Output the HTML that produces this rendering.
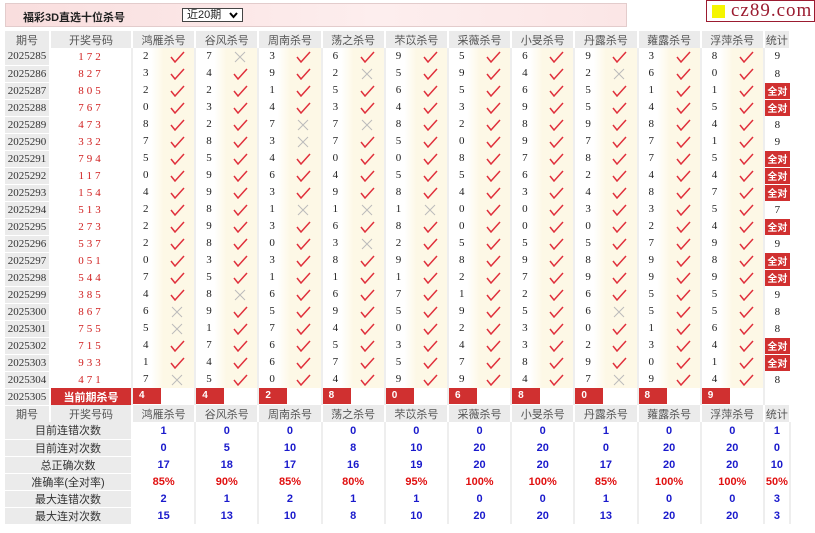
<!DOCTYPE html>
<html><head><meta charset="utf-8">
<style>
*{margin:0;padding:0;box-sizing:border-box}
body{width:815px;height:533px;background:#fff;position:relative;overflow:hidden;font-family:"Liberation Sans","Noto Sans CJK SC",sans-serif;font-size:11px;color:#222}
.bar{position:absolute;left:5px;top:3px;width:622px;height:24px;background:linear-gradient(to right,#f9dede,#fdeeee 60%,#fbe6e6);border:1px solid #e3cccc}
.bar .t{position:absolute;left:17px;top:5px;font-weight:bold;font-size:11px;color:#222}
.sel{position:absolute;left:176px;top:4px;width:61px;height:14px;border:1px solid #444;background:#fff;font-size:11px;line-height:12px;padding-left:4px}
.sel svg{position:absolute;right:4px;top:3px}
.logo{position:absolute;left:706px;top:0;width:109px;height:22px;border:1px solid #9b1b30;background:#fff;overflow:hidden}
.logo i{position:absolute;left:5px;top:4px;width:13px;height:13px;background:#f5f500}
.logo span{position:absolute;left:24px;top:-1px;font-family:"Liberation Serif",serif;font-size:19px;color:#9b1b30;letter-spacing:1px}
table{position:absolute;left:5px;top:31px;border-collapse:collapse;table-layout:fixed}
td{height:17px;padding:0;text-align:center;vertical-align:middle;white-space:nowrap}
.h td{background:#ebebeb;color:#555;font-size:11px;border-right:2px solid #fff}
.d{background:#ebebeb;font-family:"Liberation Serif",serif;font-size:11px;color:#333;border-bottom:1px solid #fff;border-right:2px solid #fff}
.n{color:#d02020;font-family:"Liberation Serif",serif;letter-spacing:3px;font-size:11px;border-right:2px solid #eee}
.k{position:relative;background:linear-gradient(to right,#fff 30%,#fdf8e6 50%,#fdf8e6);border-right:2px solid #eee}
.k b{position:absolute;left:10px;top:2px;font-weight:normal;font-family:"Liberation Serif",serif;font-size:11px}
.k svg{position:absolute;left:37px;top:3px}
.s{font-family:"Liberation Serif",serif;border-bottom:1px solid #fff}
.q{background:#d03030;color:#fff;font-weight:bold;font-size:10px;border-bottom:1px solid #fff}
.cur td.r{background:#d03030;color:#fff;font-weight:bold;border-right:2px solid #eee}
.cur td.kk{position:relative;border-right:2px solid #eee}
.cur td.kk span{position:absolute;left:0;top:0;width:28px;height:16px;background:#d03030;color:#fff;font-weight:bold;font-size:10px;text-align:left;padding-left:6px;line-height:16px}
.st td.l{background:#ebebeb;color:#333;border-bottom:1px solid #fff;border-right:2px solid #fff}
.st td.v{color:#1a1acc;font-weight:bold;font-size:11px;border-right:2px solid #eee}
.st td.p{color:#e01010}
</style></head><body>
<svg width="0" height="0" style="position:absolute"><defs>
<g id="c"><polyline points="1,6 5,11 14,1" fill="none" stroke="#e0303c" stroke-width="1.5"/></g>
<g id="x"><path d="M2,1 L12,11 M12,1 L2,11" stroke="#bbb" stroke-width="1"/></g>
</defs></svg>
<div class="bar"><span class="t">福彩3D直选十位杀号</span><div class="sel">近20期<svg width="9" height="7"><polyline points="1,1 4.5,5 8,1" fill="none" stroke="#000" stroke-width="2"/></svg></div></div>
<div class="logo"><i></i><span>cz89.com</span></div>
<table>
<colgroup><col style="width:45px"><col style="width:82px"><col span="10" style="width:63.2px"><col style="width:26px"></colgroup>
<tr class="h"><td>期号</td><td>开奖号码</td><td>鸿雁杀号</td><td>谷风杀号</td><td>周南杀号</td><td>荡之杀号</td><td>芣苡杀号</td><td>采薇杀号</td><td>小旻杀号</td><td>丹露杀号</td><td>蕹露杀号</td><td>浮萍杀号</td><td>统计</td></tr>
<tr><td class="d">2025285</td><td class="n">172</td><td class="k"><b>2</b><svg width="15" height="12"><use href="#c"/></svg></td><td class="k"><b>7</b><svg width="15" height="12"><use href="#x"/></svg></td><td class="k"><b>3</b><svg width="15" height="12"><use href="#c"/></svg></td><td class="k"><b>6</b><svg width="15" height="12"><use href="#c"/></svg></td><td class="k"><b>9</b><svg width="15" height="12"><use href="#c"/></svg></td><td class="k"><b>5</b><svg width="15" height="12"><use href="#c"/></svg></td><td class="k"><b>6</b><svg width="15" height="12"><use href="#c"/></svg></td><td class="k"><b>9</b><svg width="15" height="12"><use href="#c"/></svg></td><td class="k"><b>3</b><svg width="15" height="12"><use href="#c"/></svg></td><td class="k"><b>8</b><svg width="15" height="12"><use href="#c"/></svg></td><td class="s">9</td></tr>
<tr><td class="d">2025286</td><td class="n">827</td><td class="k"><b>3</b><svg width="15" height="12"><use href="#c"/></svg></td><td class="k"><b>4</b><svg width="15" height="12"><use href="#c"/></svg></td><td class="k"><b>9</b><svg width="15" height="12"><use href="#c"/></svg></td><td class="k"><b>2</b><svg width="15" height="12"><use href="#x"/></svg></td><td class="k"><b>5</b><svg width="15" height="12"><use href="#c"/></svg></td><td class="k"><b>9</b><svg width="15" height="12"><use href="#c"/></svg></td><td class="k"><b>4</b><svg width="15" height="12"><use href="#c"/></svg></td><td class="k"><b>2</b><svg width="15" height="12"><use href="#x"/></svg></td><td class="k"><b>6</b><svg width="15" height="12"><use href="#c"/></svg></td><td class="k"><b>0</b><svg width="15" height="12"><use href="#c"/></svg></td><td class="s">8</td></tr>
<tr><td class="d">2025287</td><td class="n">805</td><td class="k"><b>2</b><svg width="15" height="12"><use href="#c"/></svg></td><td class="k"><b>2</b><svg width="15" height="12"><use href="#c"/></svg></td><td class="k"><b>1</b><svg width="15" height="12"><use href="#c"/></svg></td><td class="k"><b>5</b><svg width="15" height="12"><use href="#c"/></svg></td><td class="k"><b>6</b><svg width="15" height="12"><use href="#c"/></svg></td><td class="k"><b>5</b><svg width="15" height="12"><use href="#c"/></svg></td><td class="k"><b>6</b><svg width="15" height="12"><use href="#c"/></svg></td><td class="k"><b>5</b><svg width="15" height="12"><use href="#c"/></svg></td><td class="k"><b>1</b><svg width="15" height="12"><use href="#c"/></svg></td><td class="k"><b>1</b><svg width="15" height="12"><use href="#c"/></svg></td><td class="q">全对</td></tr>
<tr><td class="d">2025288</td><td class="n">767</td><td class="k"><b>0</b><svg width="15" height="12"><use href="#c"/></svg></td><td class="k"><b>3</b><svg width="15" height="12"><use href="#c"/></svg></td><td class="k"><b>4</b><svg width="15" height="12"><use href="#c"/></svg></td><td class="k"><b>3</b><svg width="15" height="12"><use href="#c"/></svg></td><td class="k"><b>4</b><svg width="15" height="12"><use href="#c"/></svg></td><td class="k"><b>3</b><svg width="15" height="12"><use href="#c"/></svg></td><td class="k"><b>9</b><svg width="15" height="12"><use href="#c"/></svg></td><td class="k"><b>5</b><svg width="15" height="12"><use href="#c"/></svg></td><td class="k"><b>4</b><svg width="15" height="12"><use href="#c"/></svg></td><td class="k"><b>5</b><svg width="15" height="12"><use href="#c"/></svg></td><td class="q">全对</td></tr>
<tr><td class="d">2025289</td><td class="n">473</td><td class="k"><b>8</b><svg width="15" height="12"><use href="#c"/></svg></td><td class="k"><b>2</b><svg width="15" height="12"><use href="#c"/></svg></td><td class="k"><b>7</b><svg width="15" height="12"><use href="#x"/></svg></td><td class="k"><b>7</b><svg width="15" height="12"><use href="#x"/></svg></td><td class="k"><b>8</b><svg width="15" height="12"><use href="#c"/></svg></td><td class="k"><b>2</b><svg width="15" height="12"><use href="#c"/></svg></td><td class="k"><b>8</b><svg width="15" height="12"><use href="#c"/></svg></td><td class="k"><b>9</b><svg width="15" height="12"><use href="#c"/></svg></td><td class="k"><b>8</b><svg width="15" height="12"><use href="#c"/></svg></td><td class="k"><b>4</b><svg width="15" height="12"><use href="#c"/></svg></td><td class="s">8</td></tr>
<tr><td class="d">2025290</td><td class="n">332</td><td class="k"><b>7</b><svg width="15" height="12"><use href="#c"/></svg></td><td class="k"><b>8</b><svg width="15" height="12"><use href="#c"/></svg></td><td class="k"><b>3</b><svg width="15" height="12"><use href="#x"/></svg></td><td class="k"><b>7</b><svg width="15" height="12"><use href="#c"/></svg></td><td class="k"><b>5</b><svg width="15" height="12"><use href="#c"/></svg></td><td class="k"><b>0</b><svg width="15" height="12"><use href="#c"/></svg></td><td class="k"><b>9</b><svg width="15" height="12"><use href="#c"/></svg></td><td class="k"><b>7</b><svg width="15" height="12"><use href="#c"/></svg></td><td class="k"><b>7</b><svg width="15" height="12"><use href="#c"/></svg></td><td class="k"><b>1</b><svg width="15" height="12"><use href="#c"/></svg></td><td class="s">9</td></tr>
<tr><td class="d">2025291</td><td class="n">794</td><td class="k"><b>5</b><svg width="15" height="12"><use href="#c"/></svg></td><td class="k"><b>5</b><svg width="15" height="12"><use href="#c"/></svg></td><td class="k"><b>4</b><svg width="15" height="12"><use href="#c"/></svg></td><td class="k"><b>0</b><svg width="15" height="12"><use href="#c"/></svg></td><td class="k"><b>0</b><svg width="15" height="12"><use href="#c"/></svg></td><td class="k"><b>8</b><svg width="15" height="12"><use href="#c"/></svg></td><td class="k"><b>7</b><svg width="15" height="12"><use href="#c"/></svg></td><td class="k"><b>8</b><svg width="15" height="12"><use href="#c"/></svg></td><td class="k"><b>7</b><svg width="15" height="12"><use href="#c"/></svg></td><td class="k"><b>5</b><svg width="15" height="12"><use href="#c"/></svg></td><td class="q">全对</td></tr>
<tr><td class="d">2025292</td><td class="n">117</td><td class="k"><b>0</b><svg width="15" height="12"><use href="#c"/></svg></td><td class="k"><b>9</b><svg width="15" height="12"><use href="#c"/></svg></td><td class="k"><b>6</b><svg width="15" height="12"><use href="#c"/></svg></td><td class="k"><b>4</b><svg width="15" height="12"><use href="#c"/></svg></td><td class="k"><b>5</b><svg width="15" height="12"><use href="#c"/></svg></td><td class="k"><b>5</b><svg width="15" height="12"><use href="#c"/></svg></td><td class="k"><b>6</b><svg width="15" height="12"><use href="#c"/></svg></td><td class="k"><b>2</b><svg width="15" height="12"><use href="#c"/></svg></td><td class="k"><b>4</b><svg width="15" height="12"><use href="#c"/></svg></td><td class="k"><b>4</b><svg width="15" height="12"><use href="#c"/></svg></td><td class="q">全对</td></tr>
<tr><td class="d">2025293</td><td class="n">154</td><td class="k"><b>4</b><svg width="15" height="12"><use href="#c"/></svg></td><td class="k"><b>9</b><svg width="15" height="12"><use href="#c"/></svg></td><td class="k"><b>3</b><svg width="15" height="12"><use href="#c"/></svg></td><td class="k"><b>9</b><svg width="15" height="12"><use href="#c"/></svg></td><td class="k"><b>8</b><svg width="15" height="12"><use href="#c"/></svg></td><td class="k"><b>4</b><svg width="15" height="12"><use href="#c"/></svg></td><td class="k"><b>3</b><svg width="15" height="12"><use href="#c"/></svg></td><td class="k"><b>4</b><svg width="15" height="12"><use href="#c"/></svg></td><td class="k"><b>8</b><svg width="15" height="12"><use href="#c"/></svg></td><td class="k"><b>7</b><svg width="15" height="12"><use href="#c"/></svg></td><td class="q">全对</td></tr>
<tr><td class="d">2025294</td><td class="n">513</td><td class="k"><b>2</b><svg width="15" height="12"><use href="#c"/></svg></td><td class="k"><b>8</b><svg width="15" height="12"><use href="#c"/></svg></td><td class="k"><b>1</b><svg width="15" height="12"><use href="#x"/></svg></td><td class="k"><b>1</b><svg width="15" height="12"><use href="#x"/></svg></td><td class="k"><b>1</b><svg width="15" height="12"><use href="#x"/></svg></td><td class="k"><b>0</b><svg width="15" height="12"><use href="#c"/></svg></td><td class="k"><b>0</b><svg width="15" height="12"><use href="#c"/></svg></td><td class="k"><b>3</b><svg width="15" height="12"><use href="#c"/></svg></td><td class="k"><b>3</b><svg width="15" height="12"><use href="#c"/></svg></td><td class="k"><b>5</b><svg width="15" height="12"><use href="#c"/></svg></td><td class="s">7</td></tr>
<tr><td class="d">2025295</td><td class="n">273</td><td class="k"><b>2</b><svg width="15" height="12"><use href="#c"/></svg></td><td class="k"><b>9</b><svg width="15" height="12"><use href="#c"/></svg></td><td class="k"><b>3</b><svg width="15" height="12"><use href="#c"/></svg></td><td class="k"><b>6</b><svg width="15" height="12"><use href="#c"/></svg></td><td class="k"><b>8</b><svg width="15" height="12"><use href="#c"/></svg></td><td class="k"><b>0</b><svg width="15" height="12"><use href="#c"/></svg></td><td class="k"><b>0</b><svg width="15" height="12"><use href="#c"/></svg></td><td class="k"><b>0</b><svg width="15" height="12"><use href="#c"/></svg></td><td class="k"><b>2</b><svg width="15" height="12"><use href="#c"/></svg></td><td class="k"><b>4</b><svg width="15" height="12"><use href="#c"/></svg></td><td class="q">全对</td></tr>
<tr><td class="d">2025296</td><td class="n">537</td><td class="k"><b>2</b><svg width="15" height="12"><use href="#c"/></svg></td><td class="k"><b>8</b><svg width="15" height="12"><use href="#c"/></svg></td><td class="k"><b>0</b><svg width="15" height="12"><use href="#c"/></svg></td><td class="k"><b>3</b><svg width="15" height="12"><use href="#x"/></svg></td><td class="k"><b>2</b><svg width="15" height="12"><use href="#c"/></svg></td><td class="k"><b>5</b><svg width="15" height="12"><use href="#c"/></svg></td><td class="k"><b>5</b><svg width="15" height="12"><use href="#c"/></svg></td><td class="k"><b>5</b><svg width="15" height="12"><use href="#c"/></svg></td><td class="k"><b>7</b><svg width="15" height="12"><use href="#c"/></svg></td><td class="k"><b>9</b><svg width="15" height="12"><use href="#c"/></svg></td><td class="s">9</td></tr>
<tr><td class="d">2025297</td><td class="n">051</td><td class="k"><b>0</b><svg width="15" height="12"><use href="#c"/></svg></td><td class="k"><b>3</b><svg width="15" height="12"><use href="#c"/></svg></td><td class="k"><b>3</b><svg width="15" height="12"><use href="#c"/></svg></td><td class="k"><b>8</b><svg width="15" height="12"><use href="#c"/></svg></td><td class="k"><b>9</b><svg width="15" height="12"><use href="#c"/></svg></td><td class="k"><b>8</b><svg width="15" height="12"><use href="#c"/></svg></td><td class="k"><b>9</b><svg width="15" height="12"><use href="#c"/></svg></td><td class="k"><b>8</b><svg width="15" height="12"><use href="#c"/></svg></td><td class="k"><b>9</b><svg width="15" height="12"><use href="#c"/></svg></td><td class="k"><b>8</b><svg width="15" height="12"><use href="#c"/></svg></td><td class="q">全对</td></tr>
<tr><td class="d">2025298</td><td class="n">544</td><td class="k"><b>7</b><svg width="15" height="12"><use href="#c"/></svg></td><td class="k"><b>5</b><svg width="15" height="12"><use href="#c"/></svg></td><td class="k"><b>1</b><svg width="15" height="12"><use href="#c"/></svg></td><td class="k"><b>1</b><svg width="15" height="12"><use href="#c"/></svg></td><td class="k"><b>1</b><svg width="15" height="12"><use href="#c"/></svg></td><td class="k"><b>2</b><svg width="15" height="12"><use href="#c"/></svg></td><td class="k"><b>7</b><svg width="15" height="12"><use href="#c"/></svg></td><td class="k"><b>9</b><svg width="15" height="12"><use href="#c"/></svg></td><td class="k"><b>9</b><svg width="15" height="12"><use href="#c"/></svg></td><td class="k"><b>9</b><svg width="15" height="12"><use href="#c"/></svg></td><td class="q">全对</td></tr>
<tr><td class="d">2025299</td><td class="n">385</td><td class="k"><b>4</b><svg width="15" height="12"><use href="#c"/></svg></td><td class="k"><b>8</b><svg width="15" height="12"><use href="#x"/></svg></td><td class="k"><b>6</b><svg width="15" height="12"><use href="#c"/></svg></td><td class="k"><b>6</b><svg width="15" height="12"><use href="#c"/></svg></td><td class="k"><b>7</b><svg width="15" height="12"><use href="#c"/></svg></td><td class="k"><b>1</b><svg width="15" height="12"><use href="#c"/></svg></td><td class="k"><b>2</b><svg width="15" height="12"><use href="#c"/></svg></td><td class="k"><b>6</b><svg width="15" height="12"><use href="#c"/></svg></td><td class="k"><b>5</b><svg width="15" height="12"><use href="#c"/></svg></td><td class="k"><b>5</b><svg width="15" height="12"><use href="#c"/></svg></td><td class="s">9</td></tr>
<tr><td class="d">2025300</td><td class="n">867</td><td class="k"><b>6</b><svg width="15" height="12"><use href="#x"/></svg></td><td class="k"><b>9</b><svg width="15" height="12"><use href="#c"/></svg></td><td class="k"><b>5</b><svg width="15" height="12"><use href="#c"/></svg></td><td class="k"><b>9</b><svg width="15" height="12"><use href="#c"/></svg></td><td class="k"><b>5</b><svg width="15" height="12"><use href="#c"/></svg></td><td class="k"><b>9</b><svg width="15" height="12"><use href="#c"/></svg></td><td class="k"><b>5</b><svg width="15" height="12"><use href="#c"/></svg></td><td class="k"><b>6</b><svg width="15" height="12"><use href="#x"/></svg></td><td class="k"><b>5</b><svg width="15" height="12"><use href="#c"/></svg></td><td class="k"><b>5</b><svg width="15" height="12"><use href="#c"/></svg></td><td class="s">8</td></tr>
<tr><td class="d">2025301</td><td class="n">755</td><td class="k"><b>5</b><svg width="15" height="12"><use href="#x"/></svg></td><td class="k"><b>1</b><svg width="15" height="12"><use href="#c"/></svg></td><td class="k"><b>7</b><svg width="15" height="12"><use href="#c"/></svg></td><td class="k"><b>4</b><svg width="15" height="12"><use href="#c"/></svg></td><td class="k"><b>0</b><svg width="15" height="12"><use href="#c"/></svg></td><td class="k"><b>2</b><svg width="15" height="12"><use href="#c"/></svg></td><td class="k"><b>3</b><svg width="15" height="12"><use href="#c"/></svg></td><td class="k"><b>0</b><svg width="15" height="12"><use href="#c"/></svg></td><td class="k"><b>1</b><svg width="15" height="12"><use href="#c"/></svg></td><td class="k"><b>6</b><svg width="15" height="12"><use href="#c"/></svg></td><td class="s">8</td></tr>
<tr><td class="d">2025302</td><td class="n">715</td><td class="k"><b>4</b><svg width="15" height="12"><use href="#c"/></svg></td><td class="k"><b>7</b><svg width="15" height="12"><use href="#c"/></svg></td><td class="k"><b>6</b><svg width="15" height="12"><use href="#c"/></svg></td><td class="k"><b>5</b><svg width="15" height="12"><use href="#c"/></svg></td><td class="k"><b>3</b><svg width="15" height="12"><use href="#c"/></svg></td><td class="k"><b>4</b><svg width="15" height="12"><use href="#c"/></svg></td><td class="k"><b>3</b><svg width="15" height="12"><use href="#c"/></svg></td><td class="k"><b>2</b><svg width="15" height="12"><use href="#c"/></svg></td><td class="k"><b>3</b><svg width="15" height="12"><use href="#c"/></svg></td><td class="k"><b>4</b><svg width="15" height="12"><use href="#c"/></svg></td><td class="q">全对</td></tr>
<tr><td class="d">2025303</td><td class="n">933</td><td class="k"><b>1</b><svg width="15" height="12"><use href="#c"/></svg></td><td class="k"><b>4</b><svg width="15" height="12"><use href="#c"/></svg></td><td class="k"><b>6</b><svg width="15" height="12"><use href="#c"/></svg></td><td class="k"><b>7</b><svg width="15" height="12"><use href="#c"/></svg></td><td class="k"><b>5</b><svg width="15" height="12"><use href="#c"/></svg></td><td class="k"><b>7</b><svg width="15" height="12"><use href="#c"/></svg></td><td class="k"><b>8</b><svg width="15" height="12"><use href="#c"/></svg></td><td class="k"><b>9</b><svg width="15" height="12"><use href="#c"/></svg></td><td class="k"><b>0</b><svg width="15" height="12"><use href="#c"/></svg></td><td class="k"><b>1</b><svg width="15" height="12"><use href="#c"/></svg></td><td class="q">全对</td></tr>
<tr><td class="d">2025304</td><td class="n">471</td><td class="k"><b>7</b><svg width="15" height="12"><use href="#x"/></svg></td><td class="k"><b>5</b><svg width="15" height="12"><use href="#c"/></svg></td><td class="k"><b>0</b><svg width="15" height="12"><use href="#c"/></svg></td><td class="k"><b>4</b><svg width="15" height="12"><use href="#c"/></svg></td><td class="k"><b>9</b><svg width="15" height="12"><use href="#c"/></svg></td><td class="k"><b>9</b><svg width="15" height="12"><use href="#c"/></svg></td><td class="k"><b>4</b><svg width="15" height="12"><use href="#c"/></svg></td><td class="k"><b>7</b><svg width="15" height="12"><use href="#x"/></svg></td><td class="k"><b>9</b><svg width="15" height="12"><use href="#c"/></svg></td><td class="k"><b>4</b><svg width="15" height="12"><use href="#c"/></svg></td><td class="s">8</td></tr>
<tr class="cur"><td class="d">2025305</td><td class="r">当前期杀号</td><td class="kk"><span>4</span></td><td class="kk"><span>4</span></td><td class="kk"><span>2</span></td><td class="kk"><span>8</span></td><td class="kk"><span>0</span></td><td class="kk"><span>6</span></td><td class="kk"><span>8</span></td><td class="kk"><span>0</span></td><td class="kk"><span>8</span></td><td class="kk"><span>9</span></td><td></td></tr>
<tr class="h"><td>期号</td><td>开奖号码</td><td>鸿雁杀号</td><td>谷风杀号</td><td>周南杀号</td><td>荡之杀号</td><td>芣苡杀号</td><td>采薇杀号</td><td>小旻杀号</td><td>丹露杀号</td><td>蕹露杀号</td><td>浮萍杀号</td><td>统计</td></tr>
<tr class="st"><td class="l" colspan="2">目前连错次数</td><td class="v">1</td><td class="v">0</td><td class="v">0</td><td class="v">0</td><td class="v">0</td><td class="v">0</td><td class="v">0</td><td class="v">1</td><td class="v">0</td><td class="v">0</td><td class="v">1</td></tr>
<tr class="st"><td class="l" colspan="2">目前连对次数</td><td class="v">0</td><td class="v">5</td><td class="v">10</td><td class="v">8</td><td class="v">10</td><td class="v">20</td><td class="v">20</td><td class="v">0</td><td class="v">20</td><td class="v">20</td><td class="v">0</td></tr>
<tr class="st"><td class="l" colspan="2">总正确次数</td><td class="v">17</td><td class="v">18</td><td class="v">17</td><td class="v">16</td><td class="v">19</td><td class="v">20</td><td class="v">20</td><td class="v">17</td><td class="v">20</td><td class="v">20</td><td class="v">10</td></tr>
<tr class="st"><td class="l" colspan="2">准确率(全对率)</td><td class="v p">85%</td><td class="v p">90%</td><td class="v p">85%</td><td class="v p">80%</td><td class="v p">95%</td><td class="v p">100%</td><td class="v p">100%</td><td class="v p">85%</td><td class="v p">100%</td><td class="v p">100%</td><td class="v p">50%</td></tr>
<tr class="st"><td class="l" colspan="2">最大连错次数</td><td class="v">2</td><td class="v">1</td><td class="v">2</td><td class="v">1</td><td class="v">1</td><td class="v">0</td><td class="v">0</td><td class="v">1</td><td class="v">0</td><td class="v">0</td><td class="v">3</td></tr>
<tr class="st"><td class="l" colspan="2">最大连对次数</td><td class="v">15</td><td class="v">13</td><td class="v">10</td><td class="v">8</td><td class="v">10</td><td class="v">20</td><td class="v">20</td><td class="v">13</td><td class="v">20</td><td class="v">20</td><td class="v">3</td></tr>
</table>
</body></html>
